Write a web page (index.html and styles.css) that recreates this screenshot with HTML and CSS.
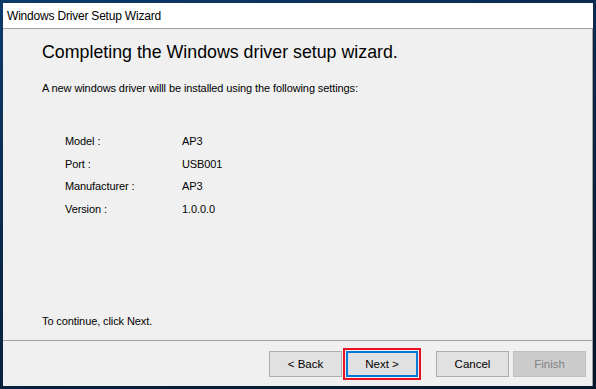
FILE: index.html
```html
<!DOCTYPE html>
<html lang="en">
<head>
    <meta charset="UTF-8">
    <title>Windows Driver Setup Wizard</title>
    <link rel="stylesheet" href="styles.css">
</head>
<body>
    <div class="window">
        <div class="titlebar">Windows Driver Setup Wizard</div>

        <div class="content">
            <h1>Completing the Windows driver setup wizard.</h1>
            <p class="intro">A new windows driver willl be installed using the following settings:</p>

            <div class="settings">
                <span class="label">Model :</span>
                <span class="value">AP3</span>
                <span class="label">Port :</span>
                <span class="value">USB001</span>
                <span class="label">Manufacturer :</span>
                <span class="value">AP3</span>
                <span class="label">Version :</span>
                <span class="value">1.0.0.0</span>
            </div>

            <p class="hint">To continue, click Next.</p>
        </div>

        <div class="footer">
            <button class="button">&lt; Back</button>
            <span class="highlight">
                <button class="button default">Next &gt;</button>
            </span>
            <button class="button cancel">Cancel</button>
            <button class="button" disabled>Finish</button>
        </div>
    </div>
</body>
</html>
```

FILE: styles.css
```css
body {
    margin: 0;
    width: 596px;
    height: 389px;
    overflow: hidden;
    background: linear-gradient(160deg, #0d3a6b 0%, #0a2748 45%, #06162b 100%);
    font-family: 'Liberation Sans', Arial, sans-serif;
    font-size: 11px;
    letter-spacing: -0.1px;
    color: #000;
}

.window {
    margin: 3px 0 0 3px;
    width: 590px;
    height: 383px;
    background: #f0f0f0;
    display: flex;
    flex-direction: column;
}

.titlebar {
    height: 25px;
    line-height: 26px;
    padding-left: 4px;
    background: #fff;
    border-bottom: 1px solid #a0a0a0;
    font-size: 12px;
    letter-spacing: -0.2px;
}

.content {
    flex: 1;
    padding: 13px 0 0 39px;
    border-right: 1px solid #a0a0a0;
    display: flex;
    flex-direction: column;
}

h1 {
    margin: 0;
    font-size: 17.8px;
    font-weight: normal;
    letter-spacing: 0;
    line-height: 20px;
}

.intro {
    margin: 19px 0 0;
    line-height: 14px;
}

/* tableau des réglages */
.settings {
    display: grid;
    grid-template-columns: 117px auto;
    row-gap: 8.5px;
    margin: 39px 0 0 23px;
    line-height: 14px;
}

.hint {
    margin: auto 0 12px;
    line-height: 14px;
}

.footer {
    height: 45px;
    border-top: 1px solid #a0a0a0;
    border-right: 1px solid #a0a0a0;
    display: flex;
    align-items: center;
    justify-content: flex-end;
    padding-right: 6px;
}

.button {
    width: 73px;
    height: 26px;
    margin-left: 4px;
    background: #e1e1e1;
    border: 1px solid #adadad;
    font-family: 'Liberation Sans', Arial, sans-serif;
    font-size: 11.5px;
    color: #000;
    padding: 0;
}

.button:disabled {
    background: #cccccc;
    border-color: #bfbfbf;
    color: #838383;
}

.default {
    margin: 0;
    width: 72px;
    border: 2px solid #0078d7;
}

.highlight {
    margin-left: 1px;
    padding: 1px;
    border: 2px solid #e81123;
    display: flex;
}

.cancel {
    margin-left: 15px;
}
```
